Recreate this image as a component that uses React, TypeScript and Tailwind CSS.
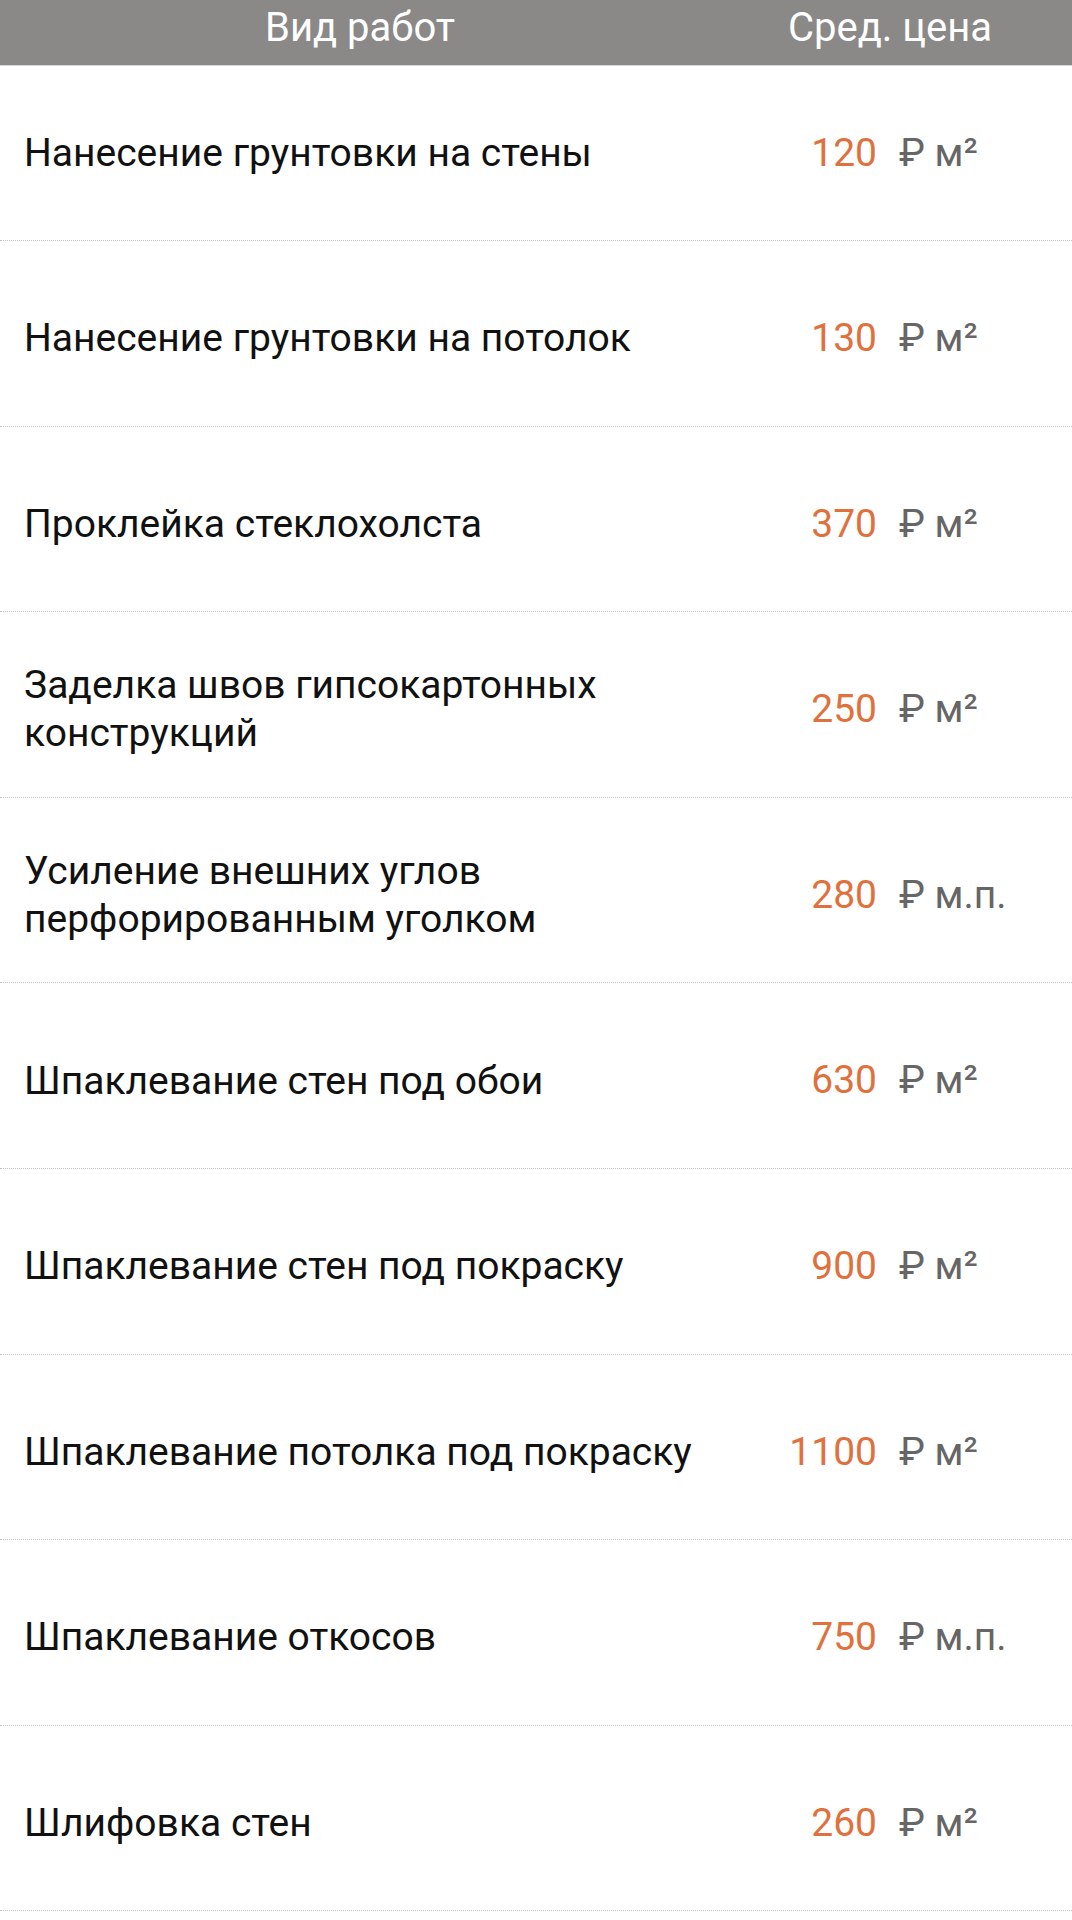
const rows: { name: string[]; price: string; unit: string }[] = [
  { name: ["Нанесение грунтовки на стены"], price: "120", unit: "м²" },
  { name: ["Нанесение грунтовки на потолок"], price: "130", unit: "м²" },
  { name: ["Проклейка стеклохолста"], price: "370", unit: "м²" },
  { name: ["Заделка швов гипсокартонных", "конструкций"], price: "250", unit: "м²" },
  { name: ["Усиление внешних углов", "перфорированным уголком"], price: "280", unit: "м.п." },
  { name: ["Шпаклевание стен под обои"], price: "630", unit: "м²" },
  { name: ["Шпаклевание стен под покраску"], price: "900", unit: "м²" },
  { name: ["Шпаклевание потолка под покраску"], price: "1100", unit: "м²" },
  { name: ["Шпаклевание откосов"], price: "750", unit: "м.п." },
  { name: ["Шлифовка стен"], price: "260", unit: "м²" },
];

export default function App() {
  return (
    <div className="w-[1072px] min-h-[1920px] bg-white font-['Roboto',sans-serif]">
      <div className="flex h-[66px] items-center pb-[10px] bg-[#8a8988] border-b border-[#d6d6d6] text-white text-[40px] leading-[48px]">
        <div className="w-[720px] text-center">Вид работ</div>
        <div className="flex-1 text-center pr-[12px]">Сред. цена</div>
      </div>

      {rows.map((r, i) => (
        <div
          key={i}
          className={
            "flex items-center border-b border-dotted border-[#c4c4c4] " +
            (i === 0 ? "h-[175px]" : "h-[185.6px] pt-[10px]")
          }
        >
          <div className="flex-1 pl-[24px] text-[39px] leading-[48px] text-[#111]">
            {r.name.map((l, j) => (
              <div key={j}>{l}</div>
            ))}
          </div>
          <div className="w-[120px] text-right text-[39px] text-[#e0703c]">{r.price}</div>
          <div className="w-[195px] pl-[22px] text-[39px] text-[#666]">
            ₽ {r.unit}
          </div>
        </div>
      ))}
    </div>
  );
}
